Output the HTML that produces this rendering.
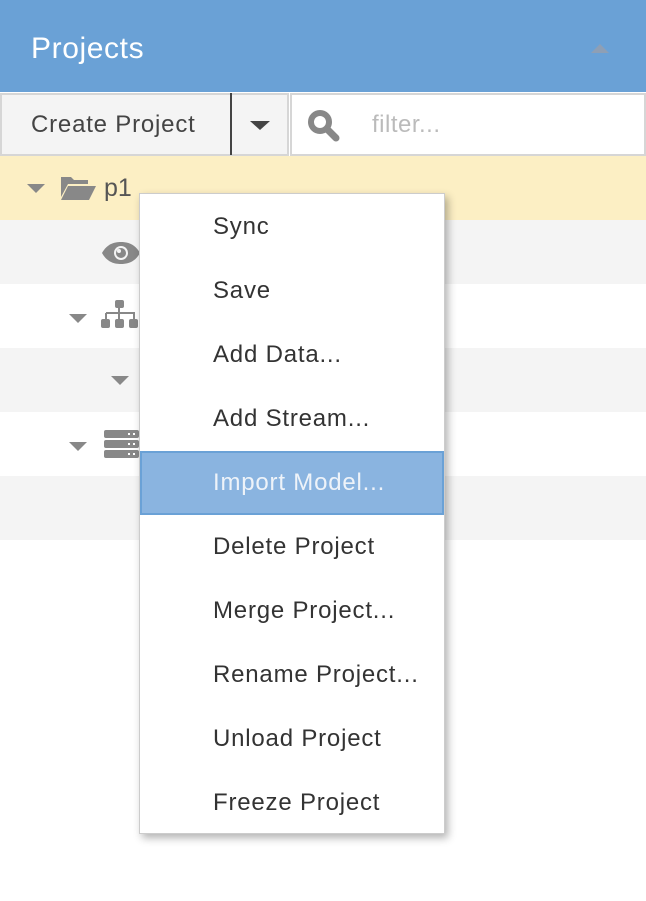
<!DOCTYPE html>
<html><head><style>
*{margin:0;padding:0;box-sizing:border-box}
body{width:646px;height:901px;background:#fff;font-family:"Liberation Sans",sans-serif;position:relative;overflow:hidden;color:#333}
.hdr{position:absolute;left:0;top:0;width:646px;height:92px;background:#6aa1d6}
.hdr span{position:absolute;left:31px;top:32px;font-size:30px;color:#fff;letter-spacing:0.6px}
.up{position:absolute;left:591px;top:44px;width:0;height:0;border-left:9px solid transparent;border-right:9px solid transparent;border-bottom:9px solid #8e9fb5}
.btn{position:absolute;left:0;top:93px;width:289px;height:63px;background:#f4f4f4;border:2px solid #d6d6d6}
.btn span{position:absolute;left:29px;top:16px;font-size:24px;color:#444;letter-spacing:0.8px}
.div{position:absolute;left:230px;top:93px;width:2px;height:62px;background:#444}
.dc{position:absolute;left:250px;top:121px;border-left:10px solid transparent;border-right:10px solid transparent;border-top:9px solid #444}
.srch{position:absolute;left:290px;top:93px;width:356px;height:63px;background:#fff;border:2px solid #d6d6d6}
.srch span{position:absolute;left:80px;top:16px;font-size:24px;color:#bbb;letter-spacing:0.5px}
.row{position:absolute;left:0;width:646px;height:64px}
.tri{position:absolute;border-left:9px solid transparent;border-right:9px solid transparent;border-top:9px solid #888}
.menu{position:absolute;left:139px;top:193px;width:306px;height:641px;background:#fff;border:1px solid #ccc;box-shadow:3px 4px 8px rgba(0,0,0,.3)}
.it{position:absolute;left:0;width:304px;height:64px;font-size:24px;color:#333;padding-left:73px;line-height:64px;letter-spacing:0.8px;white-space:nowrap}
.hl{background:#8ab4e0;border:2px solid #6aa1d6;color:#eef3f9;line-height:60px;padding-left:71px}
</style></head><body>
<div class="hdr"><span>Projects</span><div class="up"></div></div>
<div class="btn"><span>Create Project</span></div>
<div class="div"></div><div class="dc"></div>
<div class="srch"><svg style="position:absolute;left:15px;top:14px" width="36" height="36" viewBox="0 0 36 36"><circle cx="13" cy="13" r="9" fill="none" stroke="#888" stroke-width="6"/><line x1="20" y1="20" x2="29" y2="29" stroke="#888" stroke-width="7" stroke-linecap="round"/></svg><span>filter...</span></div>
<div class="row" style="top:156px;background:#fcefc4"><div class="tri" style="left:27px;top:28px"></div>
<svg style="position:absolute;left:59px;top:17px" width="38" height="30" viewBox="0 0 38 30"><path d="M2 4h10l3 3h14v4H9L2 24z" fill="#888"/><path d="M9 13h28l-7 14H2z" fill="#888"/></svg>
<span style="position:absolute;left:104px;top:18px;font-size:25px;color:#555">p1</span></div>
<div class="row" style="top:220px;background:#f4f4f4"><svg style="position:absolute;left:101px;top:21px" width="40" height="24" viewBox="0 0 40 24"><path d="M1 12C6 3 13 1 20 1s14 2 19 11c-5 9-12 11-19 11S6 21 1 12z" fill="#888"/><circle cx="20" cy="12" r="7" fill="#f4f4f4"/><circle cx="20" cy="12" r="5" fill="#888"/><circle cx="18" cy="10" r="2" fill="#f4f4f4"/></svg></div>
<div class="row" style="top:284px;background:#fff"><div class="tri" style="left:69px;top:30px"></div>
<svg style="position:absolute;left:100px;top:16px" width="40" height="32" viewBox="0 0 40 32"><rect x="15" y="0" width="9" height="8" rx="2" fill="#888"/><path d="M19 8v5M6 13h28v6M6 13v6M19 13v6" stroke="#888" stroke-width="2" fill="none"/><rect x="1" y="19" width="9" height="9" rx="2" fill="#888"/><rect x="15" y="19" width="9" height="9" rx="2" fill="#888"/><rect x="29" y="19" width="9" height="9" rx="2" fill="#888"/></svg></div>
<div class="row" style="top:348px;background:#f4f4f4"><div class="tri" style="left:111px;top:28px"></div></div>
<div class="row" style="top:412px;background:#fff"><div class="tri" style="left:69px;top:30px"></div>
<svg style="position:absolute;left:104px;top:18px" width="36" height="30" viewBox="0 0 36 30"><rect x="0" y="0" width="35" height="8" rx="2" fill="#888"/><rect x="0" y="10" width="35" height="8" rx="2" fill="#888"/><rect x="0" y="20" width="35" height="8" rx="2" fill="#888"/><g fill="#fff"><rect x="24" y="3" width="2" height="2"/><rect x="29" y="3" width="2" height="2"/><rect x="24" y="13" width="2" height="2"/><rect x="29" y="13" width="2" height="2"/><rect x="24" y="23" width="2" height="2"/><rect x="29" y="23" width="2" height="2"/></g></svg></div>
<div class="row" style="top:476px;background:#f4f4f4"></div>
<div class="menu">
<div class="it" style="top:1px">Sync</div>
<div class="it" style="top:65px">Save</div>
<div class="it" style="top:129px">Add Data...</div>
<div class="it" style="top:193px">Add Stream...</div>
<div class="it hl" style="top:257px;height:64px">Import Model...</div>
<div class="it" style="top:321px">Delete Project</div>
<div class="it" style="top:385px">Merge Project...</div>
<div class="it" style="top:449px">Rename Project...</div>
<div class="it" style="top:513px">Unload Project</div>
<div class="it" style="top:577px">Freeze Project</div>
</div>
</body></html>
